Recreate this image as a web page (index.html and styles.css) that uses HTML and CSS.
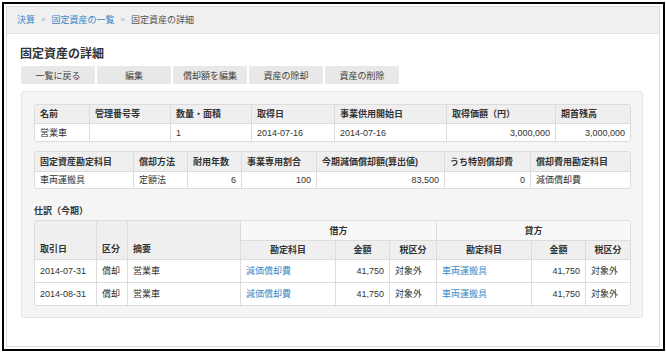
FILE: index.html
```html
<!DOCTYPE html>
<html lang="ja">
<head>
<meta charset="utf-8">
<title>固定資産の詳細</title>
<link rel="stylesheet" href="styles.css">
</head>
<body>
<div class="shot">
  <div class="frame">
    <div class="crumbs">
      <a href="#">決算</a><span class="sep">»</span><a href="#">固定資産の一覧</a><span class="sep">»</span><span class="cur">固定資産の詳細</span>
    </div>
    <div class="content">
      <h1 class="title">固定資産の詳細</h1>
      <div class="btns">
        <button class="btn">一覧に戻る</button>
        <button class="btn">編集</button>
        <button class="btn">償却額を編集</button>
        <button class="btn">資産の除却</button>
        <button class="btn">資産の削除</button>
      </div>
      <div class="well">
        <table class="tbl t1">
          <colgroup>
            <col style="width:54px"><col style="width:81px"><col style="width:81px"><col style="width:83px"><col style="width:112px"><col style="width:109px"><col style="width:75px">
          </colgroup>
          <tr><th>名前</th><th>管理番号等</th><th>数量・面積</th><th>取得日</th><th>事業供用開始日</th><th>取得価額（円）</th><th>期首残高</th></tr>
          <tr><td>営業車</td><td></td><td>1</td><td>2014-07-16</td><td>2014-07-16</td><td class="num">3,000,000</td><td class="num">3,000,000</td></tr>
        </table>
        <table class="tbl t2">
          <colgroup>
            <col style="width:98px"><col style="width:54px"><col style="width:54px"><col style="width:75px"><col style="width:128px"><col style="width:86px"><col style="width:100px">
          </colgroup>
          <tr><th>固定資産勘定科目</th><th>償却方法</th><th>耐用年数</th><th>事業専用割合</th><th>今期減価償却額(算出値)</th><th>うち特別償却費</th><th>償却費用勘定科目</th></tr>
          <tr><td>車両運搬具</td><td>定額法</td><td class="num">6</td><td class="num">100</td><td class="num">83,500</td><td class="num">0</td><td>減価償却費</td></tr>
        </table>
        <div class="sub">仕訳（今期）</div>
        <table class="tbl t3">
          <colgroup>
            <col style="width:61px"><col style="width:31px"><col style="width:113px"><col style="width:95px"><col style="width:54px"><col style="width:47px"><col style="width:95px"><col style="width:54px"><col style="width:45px">
          </colgroup>
          <tr class="h1"><th rowspan="2" class="bot">取引日</th><th rowspan="2" class="bot">区分</th><th rowspan="2" class="bot">摘要</th><th colspan="3" class="grp">借方</th><th colspan="3" class="grp">貸方</th></tr>
          <tr class="h2"><th class="c lb">勘定科目</th><th class="c">金額</th><th class="c">税区分</th><th class="c">勘定科目</th><th class="c">金額</th><th class="c">税区分</th></tr>
          <tr class="d"><td>2014-07-31</td><td>償却</td><td>営業車</td><td><a href="#">減価償却費</a></td><td class="num">41,750</td><td>対象外</td><td><a href="#">車両運搬具</a></td><td class="num">41,750</td><td>対象外</td></tr>
          <tr class="d"><td>2014-08-31</td><td>償却</td><td>営業車</td><td><a href="#">減価償却費</a></td><td class="num">41,750</td><td>対象外</td><td><a href="#">車両運搬具</a></td><td class="num">41,750</td><td>対象外</td></tr>
        </table>
      </div>
    </div>
  </div>
</div>
</body>
</html>
```

FILE: styles.css
```css
* { box-sizing: border-box; }
html, body { margin: 0; padding: 0; background: #fff; }
body {
  font-family: "Liberation Sans", "Noto Sans CJK JP", sans-serif;
  font-size: 9px;
  color: #333;
}
a { color: #3c87c6; text-decoration: none; }

.shot {
  margin: 2px 1px 0 2px;
  width: 663px;
  height: 349px;
  border: 2px solid #000;
  padding: 2px 3px 2px 2px;
}
.frame {
  height: 100%;
  border: 1px solid #dcdcdc;
  background: #fff;
}
.crumbs {
  height: 27px;
  background: #f0f0f0;
  border-bottom: 1px solid #e4e4e4;
  padding-left: 10px;
  display: flex;
  align-items: center;
  line-height: 12px;
}
.crumbs .sep { color: #aaa; padding: 0 6px; font-size: 8px; }
.crumbs .cur { color: #555; }

.content { padding: 0 15px 0 14px; }
.title {
  margin: 12px 0 0 -1px;
  font-size: 12px;
  line-height: 16px;
  font-weight: bold;
  color: #333;
}
.btns { display: flex; gap: 2px; margin-top: 4px; }
.btn {
  width: 74px;
  height: 18px;
  border: 0;
  border-radius: 2px;
  background: #e8e8e8;
  font-family: inherit;
  font-size: 9px;
  color: #444;
  padding: 0;
}
.well {
  margin-top: 7px;
  width: 622px;
  height: 227px;
  background: #f5f5f5;
  border: 1px solid #e6e6e6;
  border-radius: 3px;
  padding: 12px 13px 0 12px;
}
.tbl {
  width: 595px;
  table-layout: fixed;
  border-collapse: separate;
  border-spacing: 0;
  border: 1px solid #dcdcdc;
  border-radius: 3px;
  background: #fff;
  line-height: 12px;
}
.tbl th, .tbl td {
  border-left: 1px solid #dcdcdc;
  border-top: 1px solid #dcdcdc;
  padding: 0 5px;
  text-align: left;
  white-space: nowrap;
  overflow: hidden;
}
.tbl tr:first-child > * { border-top: 0; }
.tbl tr > *:first-child { border-left: 0; }
.tbl tr > .lb { border-left: 1px solid #dcdcdc; }
.tbl th { background: #efefef; font-weight: bold; color: #333; }
.tbl .num { text-align: right; }

.t1 th, .t1 td { height: 18px; }
.t2 { margin-top: 9px; }
.t2 th { height: 19px; }
.t2 td { height: 17px; }

.sub {
  margin-top: 16px;
  font-weight: bold;
  line-height: 12px;
  height: 15px;
}
.t3 .h1 th { height: 19px; }
.t3 .h2 th { height: 19px; }
.t3 th.grp { background: #f8f8f8; text-align: center; }
.t3 th.c { text-align: center; }
.t3 th.bot { vertical-align: bottom; padding-bottom: 4px; }
.t3 .d td { height: 23px; }
```
